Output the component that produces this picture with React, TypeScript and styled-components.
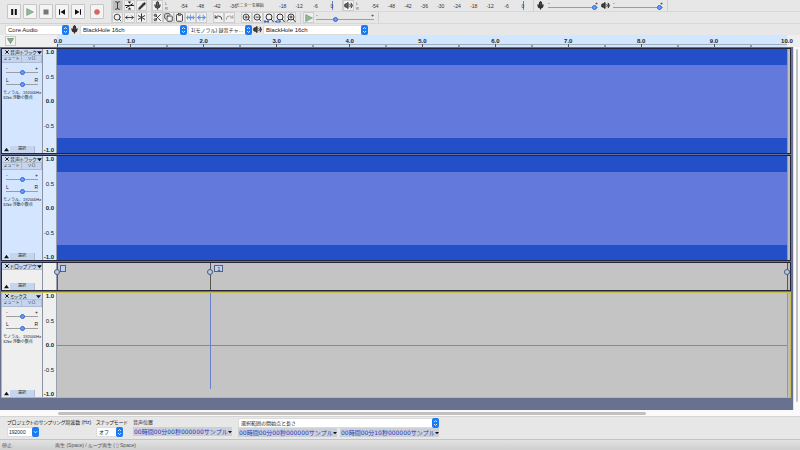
import React from "react";
import styled, { createGlobalStyle, css } from "styled-components";
import {
  Clipboard,
  Copy,
  Mic,
  MoveHorizontal,
  Pencil,
  Redo,
  Scissors,
  Search,
  TextCursor,
  Undo,
  Volume2,
  ZoomIn,
  ZoomOut,
} from "lucide-react";

const sans = `"Liberation Sans", "Noto Sans CJK JP", "DejaVu Sans", sans-serif`;

const GlobalStyle = createGlobalStyle`
  *, *::before, *::after { box-sizing: border-box; }
  body { margin: 0; background: #e7e7e7; }
  body, button, input, select {
    font-family: ${sans};
    font-size: 5px;
    line-height: 6px;
    font-feature-settings: "palt";
    color: #222;
  }
  button { margin: 0; padding: 0; border: 0; background: none; }
  svg { display: block; flex: none; }
`;

const Window = styled.div`
  display: flex;
  flex-direction: column;
  min-height: 100vh;
  background: #e7e7e7;
`;

/* ---------- toolbars ---------- */

const Toolbars = styled.header`
  display: flex;
  height: 24px;
  border-bottom: 1px solid #d2d2d2;
`;

const Transport = styled.div`
  display: flex;
  align-items: center;
  gap: 2px;
  padding: 0 7px;
  border-right: 1px solid #d2d2d2;
`;

const TransportButton = styled.button<{ $apart?: boolean }>`
  display: flex;
  align-items: center;
  justify-content: center;
  width: 14px;
  height: 15px;
  margin-left: ${(p) => (p.$apart ? 3 : 0)}px;
  background: #f4f4f4;
  border: 1px solid #c6c6c6;
  border-radius: 1px;
`;

const Stack = styled.div`
  display: flex;
  flex-direction: column;
  flex: 1;
`;

const Bar = styled.div`
  display: flex;
  height: 12px;
  border-bottom: 1px solid #d8d8d8;
`;

const Group = styled.div<{ $gap?: number; $inset?: number }>`
  display: flex;
  align-items: center;
  padding: 0 4px 0 ${(p) => p.$inset ?? 0}px;
  gap: ${(p) => p.$gap ?? 0}px;
  border-right: 1px solid #cfcfcf;
`;

const ToolButton = styled.button<{ $active?: boolean; $apart?: boolean }>`
  display: flex;
  align-items: center;
  justify-content: center;
  width: 11px;
  height: 11px;
  margin-left: ${(p) => (p.$apart ? 6 : 0)}px;
  border: 1px solid #cdcdcd;
  background: ${(p) => (p.$active ? "#bdbdbd" : "#f0f0f0")};
  color: #333;
`;

const Meter = styled.div`
  display: flex;
  align-items: center;
  width: 191px;
  padding-right: 9px;
  border-right: 1px solid #cfcfcf;
`;

const Channels = styled.div`
  display: flex;
  flex-direction: column;
  width: 6px;
  margin-left: 2px;
  font-size: 4px;
  line-height: 5px;
  color: #555;
`;

const MeterScale = styled.div`
  display: flex;
  flex: 1;
  justify-content: space-between;
  margin-left: 13px;
  height: 9px;
  align-items: center;
  border-right: 1px solid #5b86e0;
`;

const Centered = styled.span<{ $wide?: boolean }>`
  display: flex;
  justify-content: center;
  width: 0;
  white-space: nowrap;
  font-size: ${(p) => (p.$wide ? 4 : 5)}px;
  font-feature-settings: normal;
  color: #333;
`;

const Range = styled.input.attrs({ type: "range" })`
  appearance: none;
  display: block;
  width: 100%;
  height: 5px;
  margin: 0;
  background: linear-gradient(#9d9d9d, #9d9d9d) center / 100% 1px no-repeat;
  &::-webkit-slider-thumb {
    appearance: none;
    width: 5px;
    height: 5px;
    border: 1px solid #2f67dd;
    border-radius: 50%;
    background: #6d9cf5;
  }
`;

const SliderBox = styled.div<{ $width: number }>`
  display: flex;
  flex-direction: column;
  width: ${(p) => p.$width}px;
`;

const Marks = styled.div`
  display: flex;
  justify-content: space-between;
  font-size: 5px;
  line-height: 4px;
  height: 4px;
`;

const DeviceBar = styled.div`
  display: flex;
  align-items: center;
  gap: 1px;
  height: 11px;
  padding-left: 5px;
`;

const IconSlot = styled.span`
  display: flex;
  justify-content: center;
  width: 9px;
`;

const SelectBox = styled.label<{ $width: number }>`
  display: flex;
  width: ${(p) => p.$width}px;
  height: 10px;
  background: #fff;
  border: 1px solid #dcdcdc;
  border-right: 0;
  border-radius: 2px;
`;

const NativeSelect = styled.select<{ $small?: boolean }>`
  appearance: none;
  flex: 1;
  min-width: 0;
  padding: 0 0 0 2px;
  border: 0;
  background: transparent;
  font-size: ${(p) => (p.$small ? 5 : 6)}px;
  font-feature-settings: normal;
  line-height: 8px;
`;

const ComboInput = styled.input`
  flex: 1;
  min-width: 0;
  padding: 0 0 0 1px;
  border: 0;
  background: transparent;
  font-size: 5px;
`;

const Cap = styled.span`
  display: flex;
  align-items: center;
  justify-content: center;
  width: 7px;
  margin: -1px 0;
  border-radius: 2px;
  background: #1c7bf2;
`;

function Chevrons({ single }: { single?: boolean }) {
  return (
    <Cap>
      <svg width="5" height="8" viewBox="0 0 5 8" fill="none" stroke="#fff" strokeWidth="0.8">
        {single ? <path d="M1 3.2 2.5 4.8 4 3.2" /> : <path d="M1 3 2.5 1.5 4 3M1 5 2.5 6.5 4 5" />}
      </svg>
    </Cap>
  );
}

function Select(props: { width: number; label: string; value: string; small?: boolean }) {
  return (
    <SelectBox $width={props.width}>
      <NativeSelect aria-label={props.label} $small={props.small}>
        <option>{props.value}</option>
      </NativeSelect>
      <Chevrons />
    </SelectBox>
  );
}

/* ---------- timeline ---------- */

const Timeline = styled.div`
  display: flex;
  height: 12px;
  padding-right: 13px;
  background: #efefef;
`;

const TimelineHead = styled.div`
  width: 57px;
  padding: 1px 0 0 5px;
`;

const PinButton = styled.button`
  display: flex;
  align-items: center;
  justify-content: center;
  width: 11px;
  height: 10px;
  border: 1px solid #c8c8c8;
  background: #f3f3f3;
`;

const TimeScale = styled.div`
  display: flex;
  flex-direction: column;
  flex: 1;
  background: #d1e6ff;
`;

const TimeLabels = styled.div`
  display: flex;
  justify-content: space-between;
  height: 8px;
  padding-left: 1px;
  font-weight: bold;
  line-height: 13px;
`;

const TimeLabel = styled.span`
  display: flex;
  justify-content: center;
  width: 0;
  font-size: 6px;
  color: #222;
`;

const TickRow = styled.svg`
  width: 100%;
  height: 4px;
`;

/* ---------- tracks ---------- */

const Workspace = styled.main`
  display: flex;
  min-height: 363px;
`;

const Tracks = styled.div`
  display: flex;
  flex-direction: column;
  flex: 1;
  gap: 1px;
  min-width: 0;
  padding: 1px 2px 12px 1px;
  background: #68718f;
`;

const Frame = styled.section<{ $focused?: boolean; $short?: boolean }>`
  display: flex;
  height: ${(p) => (p.$short ? 29 : 106)}px;
  border: 1px solid ${(p) => (p.$focused ? "#c5bd55" : "#23263a")};
`;

const Panel = styled.div<{ $selected?: boolean }>`
  display: flex;
  flex-direction: column;
  width: 41px;
  background: ${(p) => (p.$selected ? "#d4e6ff" : "#efefef")};
  border-right: 1px solid #8b93a3;
`;

const PanelHead = styled.div`
  display: flex;
  align-items: center;
  height: 7px;
  padding: 0 1px;
  background: #c9d8ee;
  border-bottom: 1px solid #b2c0d6;
`;

const CloseButton = styled.button`
  display: flex;
  align-items: center;
  justify-content: center;
  width: 7px;
  height: 6px;
`;

const TitleButton = styled.button`
  display: flex;
  flex: 1;
  align-items: center;
  justify-content: space-between;
  min-width: 0;
  font-size: 5px;
  line-height: 6px;
  white-space: nowrap;
`;

const Toggles = styled.div`
  display: flex;
  height: 7px;
`;

const ToggleButton = styled.button`
  flex: 1;
  background: #c5d5ee;
  border-right: 1px solid #adbbd2;
  border-bottom: 1px solid #adbbd2;
  font-size: 4px;
  font-feature-settings: normal;
  line-height: 6px;
  white-space: nowrap;
`;

const PanelSliders = styled.div`
  display: flex;
  flex-direction: column;
  gap: 3px;
  padding: 3px 4px;
`;

const Format = styled.div`
  padding-left: 1px;
  font-size: 4px;
  font-feature-settings: normal;
  line-height: 5px;
  white-space: nowrap;
`;

const PanelFoot = styled.div`
  display: flex;
  align-items: center;
  margin-top: auto;
  height: 8px;
  padding: 0 1px;
`;

const CollapseButton = styled.button`
  display: flex;
  align-items: center;
  justify-content: center;
  width: 7px;
  height: 7px;
`;

const PickButton = styled.button`
  width: 25px;
  height: 7px;
  background: #c5d5ee;
  border-right: 1px solid #adbbd2;
  font-size: 4px;
  line-height: 6px;
`;

const Amplitude = styled.div<{ $selected?: boolean }>`
  display: flex;
  flex-direction: column;
  justify-content: space-between;
  width: 14px;
  background: ${(p) => (p.$selected ? "#dceaff" : "#efefef")};
  border-right: 1px solid #99a0ad;
`;

const AmplitudeLabel = styled.span<{ $bold?: boolean }>`
  padding-right: 2px;
  text-align: right;
  font-size: 6px;
  line-height: 6px;
  font-weight: ${(p) => (p.$bold ? "bold" : "normal")};
`;

const Lane = styled.div<{ $kind: "wave" | "silent" | "labels" }>`
  position: relative;
  flex: 1;
  background: #c4c4c4;
  ${(p) =>
    p.$kind === "wave" &&
    css`
      background: linear-gradient(#234fc8 15%, #6379dc 15% 86%, #234fc8 86%);
    `}
  ${(p) =>
    p.$kind === "silent" &&
    css`
      background: linear-gradient(#7288c8, #7288c8) center / 100% 1px no-repeat, #c4c4c4;
    `}
`;

const LaneEnd = styled.div`
  width: 3px;
  background: #bdbdbd;
  border-left: 1px solid #989898;
`;

const Impulse = styled.div`
  position: absolute;
  left: 21%;
  top: 0;
  width: 1px;
  height: 92%;
  background: #6a80cf;
`;

const Marker = styled.div<{ $at: number }>`
  position: absolute;
  top: 0;
  bottom: 0;
  left: ${(p) => p.$at}%;
  border-left: 1px solid #555;
`;

const Handle = styled.span`
  position: absolute;
  top: 6px;
  left: -4px;
  width: 6px;
  height: 6px;
  border: 1px solid #4c5a78;
  border-radius: 50%;
  background: #b9c8e4;
`;

const MarkerText = styled.span<{ $wide?: boolean }>`
  position: absolute;
  top: 2px;
  left: ${(p) => (p.$wide ? 3 : 2)}px;
  width: ${(p) => (p.$wide ? 9 : 6)}px;
  height: 7px;
  border: 1px solid #4d6291;
  background: #bcd0f2;
  text-align: center;
  font-size: 5px;
  line-height: 6px;
`;

const VerticalScroll = styled.div`
  display: flex;
  width: 7px;
  padding: 2px 2px 8px;
  background: #fafafa;
  border-left: 1px solid #e0e0e0;
`;

const HorizontalScroll = styled.div`
  display: flex;
  height: 6px;
  padding: 2px 7px 1px 58px;
  background: #fafafa;
`;

const Thumb = styled.div<{ $width?: string }>`
  width: ${(p) => p.$width ?? "100%"};
  border-radius: 2px;
  background: #c1c1c1;
`;

/* ---------- bottom ---------- */

const SelectionBar = styled.footer`
  display: flex;
  height: 23px;
  padding-left: 7px;
  border-top: 1px solid #d4d4d4;
`;

const Field = styled.div<{ $width: number }>`
  display: flex;
  flex-direction: column;
  width: ${(p) => p.$width}px;
  padding-top: 1px;
`;

const FieldLabel = styled.label`
  height: 9px;
  line-height: 9px;
  white-space: nowrap;
`;

const TimeRow = styled.div`
  display: flex;
  gap: 3px;
`;

const TimeBox = styled.div`
  display: flex;
  align-items: center;
  width: 99px;
  height: 9px;
  background: #cccfd6;
`;

const TimeInput = styled.input`
  flex: 1;
  min-width: 0;
  height: 9px;
  padding: 0 0 0 1px;
  border: 0;
  background: transparent;
  font-family: "DejaVu Sans", "Noto Sans CJK JP", sans-serif;
  font-size: 6px;
  font-feature-settings: normal;
  color: #1c40c4;
`;

const Status = styled.div`
  display: flex;
  flex: 1;
  align-items: center;
  padding-left: 2px;
  border-top: 1px solid #c4c4c4;
  background: linear-gradient(#e2e2e2, #cfcfcf);
  color: #555;
`;

const StatusText = styled.span<{ $first?: boolean }>`
  width: ${(p) => (p.$first ? "53px" : "auto")};
`;

/* ---------- drawings ---------- */

function Triangle({ up, size = 5 }: { up?: boolean; size?: number }) {
  return (
    <svg width={size} height={size} viewBox="0 0 6 6" fill="#111">
      <path d={up ? "M0 5 3 1 6 5Z" : "M0 1.5h6L3 5Z"} />
    </svg>
  );
}

function EnvelopeIcon() {
  return (
    <svg width="9" height="9" viewBox="0 0 9 9" fill="none" stroke="#222" strokeWidth="1">
      <path d="M0 4.5h9M1 6.8 8 2.6" />
      <path d="M2.8 .5h3.4L4.5 2.8ZM2.8 8.5h3.4L4.5 6.2Z" fill="#222" stroke="none" />
    </svg>
  );
}

function MultiIcon() {
  return (
    <svg width="9" height="9" viewBox="0 0 9 9" stroke="#333" strokeWidth="1">
      <path d="M4.5 .5v8M1 2.5l7 4M8 2.5l-7 4" />
    </svg>
  );
}

function TrimIcon({ outside }: { outside?: boolean }) {
  return (
    <svg width="9" height="9" viewBox="0 0 9 9" fill="none" stroke="#5c8bd8" strokeWidth="0.8">
      <path
        d={
          outside
            ? "M0 4.5h9M1.5 3v3M2.8 1.5v6M6.2 1.5v6M7.5 3v3"
            : "M0 4.5h9M1.5 2.5v4M3 3.2v2.6M4.5 1.5v6M6 3.2v2.6M7.5 2.5v4"
        }
      />
    </svg>
  );
}

function FitIcon({ kind }: { kind: "selection" | "project" | "toggle" }) {
  return (
    <svg width="10" height="10" viewBox="0 0 10 10" fill="none" stroke="#333" strokeWidth="1">
      <circle cx="5" cy="4" r="3" />
      <path d="m7 6 2.5 3" />
      {kind === "toggle" ? (
        <path d="M1 8.5 3 6M3.5 4h3M5 2.5v3" />
      ) : (
        <path d={kind === "selection" ? "M0 8.5h5M1 7v3M4 7v3" : "M0 8.5h2M4 8.5h2M2 7v3M4 7v3"} stroke="#2f67dd" />
      )}
    </svg>
  );
}

function PlayShape({ size }: { size: number }) {
  return (
    <svg width={size} height={size} viewBox="0 0 8 8">
      <path d="M.7.5 7.5 4 .7 7.5Z" fill="#8fb894" stroke="#6b9a72" strokeWidth="0.6" />
    </svg>
  );
}

function TransportShape({ d, fill = "#111" }: { d: string; fill?: string }) {
  return (
    <svg width="8" height="8" viewBox="0 0 8 8" fill={fill}>
      <path d={d} />
    </svg>
  );
}

const icon = { size: 9, strokeWidth: 2.4 };

/* ---------- composed parts ---------- */

function LevelMeter({ input, marks }: { input?: boolean; marks: string[] }) {
  return (
    <Meter>
      <ToolButton aria-label={input ? "録音メーター" : "再生メーター"}>
        {input ? <Mic {...icon} fill="#666" /> : <Volume2 {...icon} fill="#666" />}
      </ToolButton>
      <Channels>
        <span>L</span>
        <span>R</span>
      </Channels>
      <MeterScale>
        {marks.map((m, i) => (
          <Centered key={i} $wide={m.length > 3}>
            {m}
          </Centered>
        ))}
      </MeterScale>
    </Meter>
  );
}

function MarkedSlider(props: { width: number; value: number; label: string; marks?: [string, string] }) {
  const [low, high] = props.marks ?? ["-", "+"];
  return (
    <SliderBox $width={props.width}>
      <Marks>
        <span>{low}</span>
        <span>{high}</span>
      </Marks>
      <Range aria-label={props.label} defaultValue={props.value} />
    </SliderBox>
  );
}

function TrackPanel(props: { title: string; selected?: boolean; audio?: boolean }) {
  return (
    <Panel $selected={props.selected}>
      <PanelHead>
        <CloseButton aria-label="閉じる">
          <svg width="4" height="4" viewBox="0 0 4 4" stroke="#111" strokeWidth="1">
            <path d="M.3.3 3.7 3.7M3.7.3.3 3.7" />
          </svg>
        </CloseButton>
        <TitleButton>
          {props.title}
          <Triangle />
        </TitleButton>
      </PanelHead>
      {props.audio && (
        <>
          <Toggles>
            <ToggleButton>ミュート</ToggleButton>
            <ToggleButton>ソロ</ToggleButton>
          </Toggles>
          <PanelSliders>
            <MarkedSlider width={32} value={50} label="ゲイン" />
            <MarkedSlider width={32} value={50} label="パン" marks={["L", "R"]} />
          </PanelSliders>
          <Format>モノラル、192000Hz</Format>
          <Format>32bit 浮動小数点</Format>
        </>
      )}
      <PanelFoot>
        <CollapseButton aria-label="折りたたむ">
          <Triangle up />
        </CollapseButton>
        <PickButton>選択</PickButton>
      </PanelFoot>
    </Panel>
  );
}

const levels = ["1.0", "0.5", "0.0", "-0.5", "-1.0"];

function AudioTrack(props: { title: string; selected?: boolean; silent?: boolean }) {
  return (
    <Frame $focused={props.silent}>
      <TrackPanel title={props.title} selected={props.selected} audio />
      <Amplitude $selected={props.selected}>
        {levels.map((l) => (
          <AmplitudeLabel key={l} $bold={!l.includes("5")}>
            {l}
          </AmplitudeLabel>
        ))}
      </Amplitude>
      <Lane $kind={props.silent ? "silent" : "wave"}>{props.silent && <Impulse />}</Lane>
      <LaneEnd />
    </Frame>
  );
}

function TimeControl({ id, label, value }: { id?: string; label?: string; value: string }) {
  return (
    <TimeBox>
      <TimeInput id={id} aria-label={label} defaultValue={value} />
      <button aria-label="表示形式">
        <Triangle size={4} />
      </button>
    </TimeBox>
  );
}

const seconds = Array.from({ length: 11 }, (_, i) => `${i}.0`);

export default function App() {
  return (
    <Window>
      <GlobalStyle />
      <Toolbars>
        <Transport>
          <TransportButton aria-label="一時停止">
            <TransportShape d="M1.2 1h2v6h-2ZM4.8 1h2v6h-2Z" />
          </TransportButton>
          <TransportButton aria-label="再生">
            <PlayShape size={8} />
          </TransportButton>
          <TransportButton aria-label="停止">
            <TransportShape d="M1.5 1.5h5v5h-5Z" fill="#777" />
          </TransportButton>
          <TransportButton aria-label="先頭へ">
            <TransportShape d="M1 1.2h1v5.6H1ZM7 1.2v5.6L2.4 4Z" />
          </TransportButton>
          <TransportButton aria-label="末尾へ">
            <TransportShape d="M6 1.2h1v5.6H6ZM1 1.2v5.6L5.6 4Z" />
          </TransportButton>
          <TransportButton aria-label="録音" $apart>
            <TransportShape d="M4 1.2a2.8 2.8 0 1 0 .01 0Z" fill="#d4685f" />
          </TransportButton>
        </Transport>
        <Stack>
          <Bar>
            <Group $gap={1}>
              <ToolButton aria-label="選択ツール" $active>
                <TextCursor {...icon} />
              </ToolButton>
              <ToolButton aria-label="エンベロープツール">
                <EnvelopeIcon />
              </ToolButton>
              <ToolButton aria-label="描画ツール">
                <Pencil {...icon} size={8} fill="#333" />
              </ToolButton>
            </Group>
            <LevelMeter input marks={["-54", "-48", "-42", "-36", "モニターを開始", "", "-18", "-12", "-6", "0"]} />
            <LevelMeter marks={["-54", "-48", "-42", "-36", "-30", "-24", "-18", "-12", "-6", "0"]} />
            <Group $gap={3} $inset={2}>
              <Mic {...icon} fill="#444" />
              <MarkedSlider width={50} value={98} label="録音音量" />
              <Volume2 {...icon} fill="#444" />
              <MarkedSlider width={50} value={98} label="再生音量" />
            </Group>
          </Bar>
          <Bar>
            <Group $gap={1}>
              <ToolButton aria-label="ズームツール">
                <Search {...icon} />
              </ToolButton>
              <ToolButton aria-label="タイムシフトツール">
                <MoveHorizontal {...icon} />
              </ToolButton>
              <ToolButton aria-label="マルチツール">
                <MultiIcon />
              </ToolButton>
            </Group>
            <Group>
              <ToolButton aria-label="切り取り">
                <Scissors {...icon} />
              </ToolButton>
              <ToolButton aria-label="コピー">
                <Copy {...icon} />
              </ToolButton>
              <ToolButton aria-label="貼り付け">
                <Clipboard {...icon} />
              </ToolButton>
              <ToolButton aria-label="トリム">
                <TrimIcon />
              </ToolButton>
              <ToolButton aria-label="無音化">
                <TrimIcon outside />
              </ToolButton>
              <ToolButton aria-label="元に戻す" $apart>
                <Undo {...icon} />
              </ToolButton>
              <ToolButton aria-label="やり直す">
                <Redo {...icon} color="#999" />
              </ToolButton>
              <ToolButton aria-label="拡大" $apart>
                <ZoomIn {...icon} />
              </ToolButton>
              <ToolButton aria-label="縮小">
                <ZoomOut {...icon} />
              </ToolButton>
              <ToolButton aria-label="選択範囲に合わせる">
                <FitIcon kind="selection" />
              </ToolButton>
              <ToolButton aria-label="プロジェクトに合わせる">
                <FitIcon kind="project" />
              </ToolButton>
              <ToolButton aria-label="ズーム切り替え">
                <FitIcon kind="toggle" />
              </ToolButton>
            </Group>
            <Group $gap={2} $inset={2}>
              <ToolButton aria-label="指定速度で再生">
                <PlayShape size={8} />
              </ToolButton>
              <MarkedSlider width={58} value={33} label="再生速度" />
            </Group>
          </Bar>
        </Stack>
      </Toolbars>

      <DeviceBar>
        <Select width={64} label="オーディオホスト" value="Core Audio" />
        <IconSlot>
          <Mic {...icon} fill="#444" />
        </IconSlot>
        <Select width={107} label="録音デバイス" value="BlackHole 16ch" />
        <Select width={64} label="録音チャンネル" value="1(モノラル) 録音チャ…" small />
        <IconSlot>
          <Volume2 {...icon} fill="#444" />
        </IconSlot>
        <Select width={105} label="再生デバイス" value="BlackHole 16ch" />
      </DeviceBar>

      <Timeline>
        <TimelineHead>
          <PinButton aria-label="再生ヘッドを固定">
            <svg width="7" height="6" viewBox="0 0 7 6">
              <path d="M.5.5h6L3.5 5.5Z" fill="#86ad8b" stroke="#56795b" strokeWidth="0.6" />
            </svg>
          </PinButton>
        </TimelineHead>
        <TimeScale>
          <TimeLabels>
            {seconds.map((s) => (
              <TimeLabel key={s}>{s}</TimeLabel>
            ))}
          </TimeLabels>
          <TickRow viewBox="0 0 730 4" preserveAspectRatio="none">
            <path d="M0 1.5h730" stroke="#a3adba" strokeWidth="1" />
            {Array.from({ length: 21 }, (_, i) => (
              <path key={i} d={`M${i * 36.5 + 0.5} ${i % 2 ? 2 : 1}v3`} stroke="#555" strokeWidth="1" />
            ))}
          </TickRow>
        </TimeScale>
      </Timeline>

      <Workspace>
        <Tracks>
          <AudioTrack title="音声トラック" selected />
          <AudioTrack title="音声トラック" selected />
          <Frame $short>
            <TrackPanel title="ドロップアウ" />
            <Amplitude />
            <Lane $kind="labels">
              <Marker $at={0}>
                <Handle />
                <MarkerText />
              </Marker>
              <Marker $at={21}>
                <Handle />
                <MarkerText $wide>1</MarkerText>
              </Marker>
              <Marker $at={100}>
                <Handle />
              </Marker>
            </Lane>
            <LaneEnd />
          </Frame>
          <AudioTrack title="ミックス" silent />
        </Tracks>
        <VerticalScroll>
          <Thumb />
        </VerticalScroll>
      </Workspace>
      <HorizontalScroll>
        <Thumb $width="80%" />
      </HorizontalScroll>

      <SelectionBar>
        <Field $width={89}>
          <FieldLabel htmlFor="rate">プロジェクトのサンプリング周波数 (Hz)</FieldLabel>
          <SelectBox as="div" $width={32}>
            <ComboInput id="rate" defaultValue="192000" />
            <Chevrons single />
          </SelectBox>
        </Field>
        <Field $width={37}>
          <FieldLabel>スナップモード</FieldLabel>
          <Select width={27} label="スナップモード" value="オフ" small />
        </Field>
        <Field $width={105}>
          <FieldLabel htmlFor="position">音声位置</FieldLabel>
          <TimeControl id="position" value="00時間00分00秒000000サンプル" />
        </Field>
        <Field $width={201}>
          <Select width={201} label="選択範囲の表示" value="選択範囲の開始点と長さ" small />
          <TimeRow>
            <TimeControl label="開始点" value="00時間00分00秒000000サンプル" />
            <TimeControl label="長さ" value="00時間00分10秒000000サンプル" />
          </TimeRow>
        </Field>
      </SelectionBar>
      <Status>
        <StatusText $first>停止.</StatusText>
        <StatusText>再生 (Space) / ループ再生 (⇧Space)</StatusText>
      </Status>
    </Window>
  );
}
